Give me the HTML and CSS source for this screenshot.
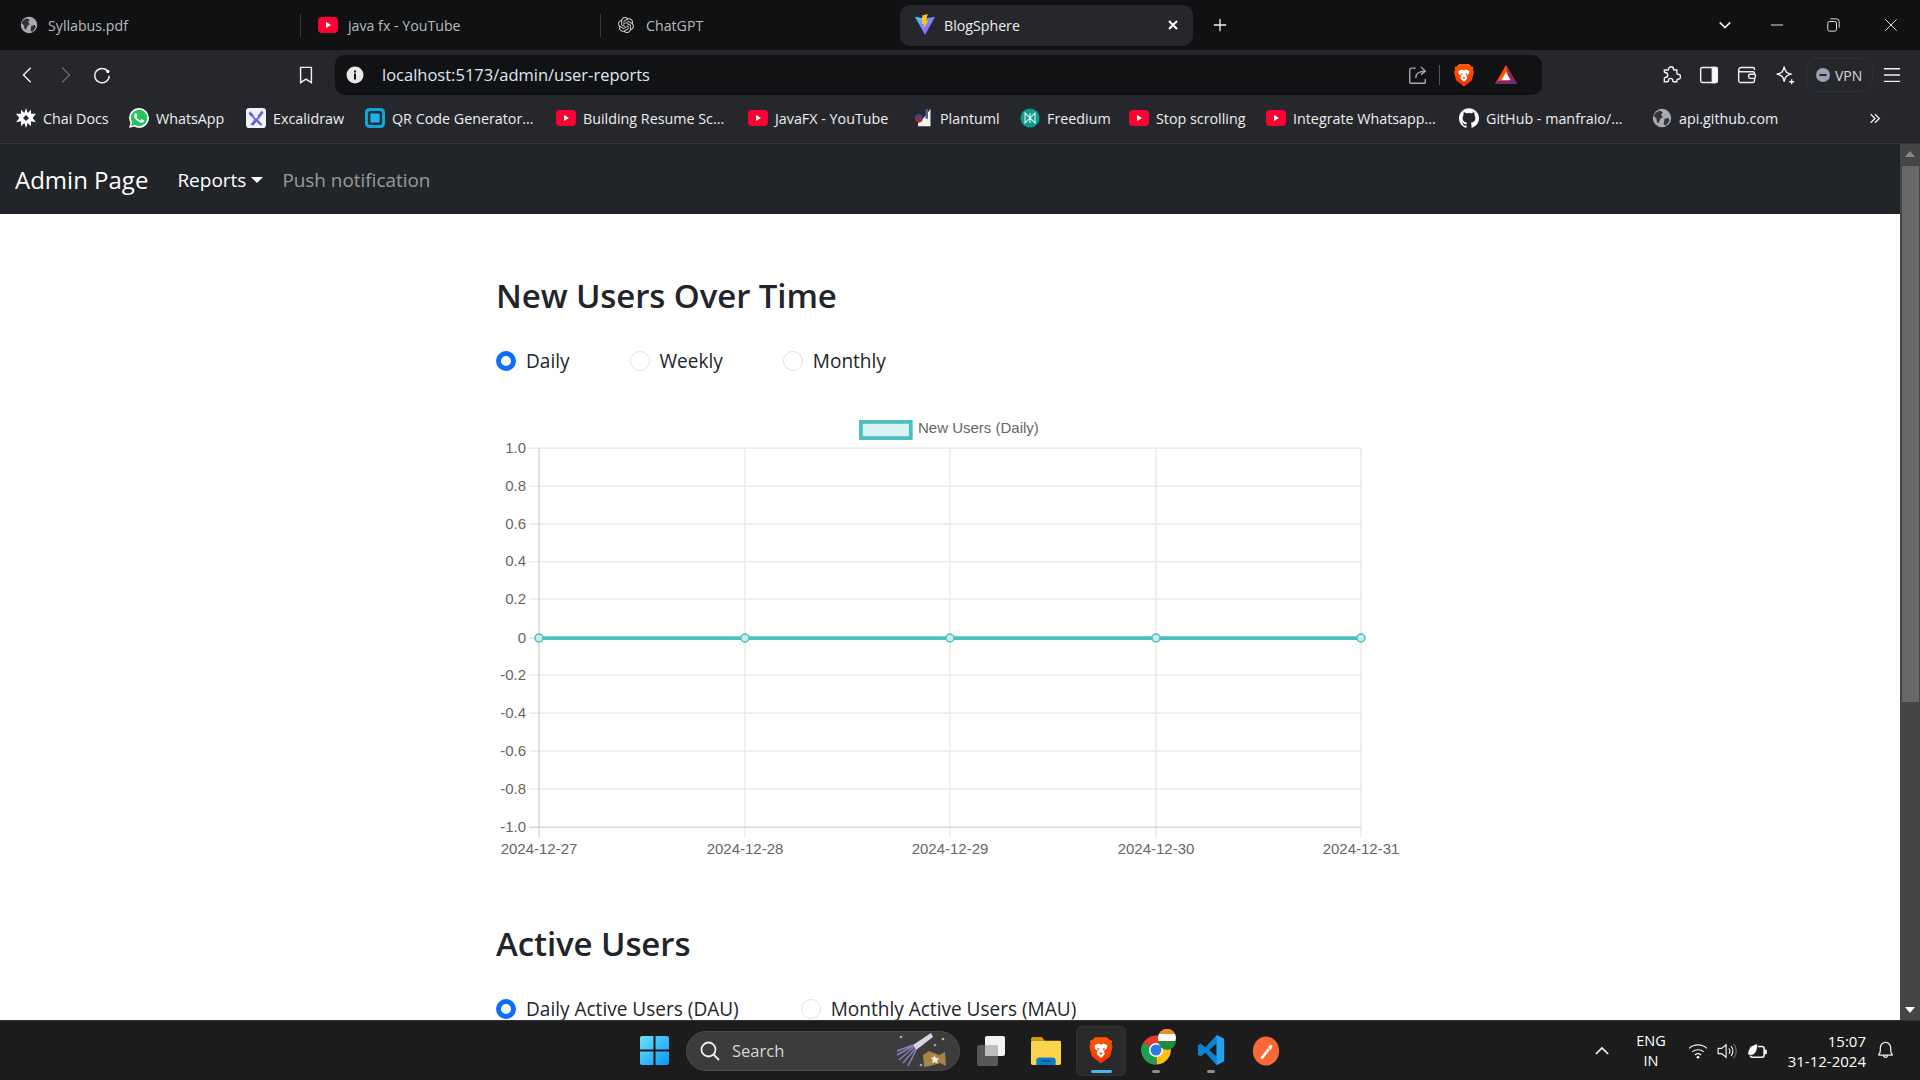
FILE: index.html
```html
<!DOCTYPE html>
<html lang="en">
<head>
<meta charset="utf-8">
<title>BlogSphere</title>
<link rel="stylesheet" href="styles.css">
</head>
<body>
<svg class="defs" aria-hidden="true">
  <defs>
    <linearGradient id="g-brave" x1="0" y1="0" x2="0" y2="1"><stop offset="0" stop-color="#ff5a00"/><stop offset="1" stop-color="#f52f10"/></linearGradient>
    <linearGradient id="g-win" x1="0" y1="0" x2="1" y2="1"><stop offset="0" stop-color="#6be3fb"/><stop offset="1" stop-color="#0a94fb"/></linearGradient>
    <linearGradient id="g-vite" x1="0" y1="0" x2="1" y2="1"><stop offset="0" stop-color="#41d1ff"/><stop offset="1" stop-color="#bd34fe"/></linearGradient>
    <symbol id="i-globe" viewBox="0 0 24 24"><circle cx="12" cy="12" r="11" fill="#a9abb0"/><path d="M4 6l5-3 4 2-2 3 2 3-3 2-2 5-2-1-1-5-3-2zM15 13l5-1 1 3-4 6-3-1z" fill="#33353a"/></symbol>
    <symbol id="i-yt" viewBox="0 0 20 16"><rect y="0" width="20" height="16" rx="4" fill="#ff0033"/><path d="M8 5l5 3-5 3z" fill="#fff"/></symbol>
    <symbol id="i-gpt" viewBox="0 0 24 24"><path fill="#c9cacc" d="M22.2819 9.8211a5.9847 5.9847 0 0 0-.5157-4.9108 6.0462 6.0462 0 0 0-6.5098-2.9A6.0651 6.0651 0 0 0 4.9807 4.1818a5.9847 5.9847 0 0 0-3.9977 2.9 6.0462 6.0462 0 0 0 .7427 7.0966 5.98 5.98 0 0 0 .511 4.9107 6.051 6.051 0 0 0 6.5146 2.9001A5.9847 5.9847 0 0 0 13.2599 24a6.0557 6.0557 0 0 0 5.7718-4.2058 5.9894 5.9894 0 0 0 3.9977-2.9001 6.0557 6.0557 0 0 0-.7475-7.0729zm-9.022 12.6081a4.4755 4.4755 0 0 1-2.8764-1.0408l.1419-.0804 4.7783-2.7582a.7948.7948 0 0 0 .3927-.6813v-6.7369l2.02 1.1686a.071.071 0 0 1 .038.052v5.5826a4.504 4.504 0 0 1-4.4945 4.4944zm-9.6607-4.1254a4.4708 4.4708 0 0 1-.5346-3.0137l.142.0852 4.783 2.7582a.7712.7712 0 0 0 .7806 0l5.8428-3.3685v2.3324a.0804.0804 0 0 1-.0332.0615L9.74 19.9502a4.4992 4.4992 0 0 1-6.1408-1.6464zM2.3408 7.8956a4.485 4.485 0 0 1 2.3655-1.9728V11.6a.7664.7664 0 0 0 .3879.6765l5.8144 3.3543-2.0201 1.1685a.0757.0757 0 0 1-.071 0l-4.8303-2.7865A4.504 4.504 0 0 1 2.3408 7.872zm16.5963 3.8558L13.1038 8.364 15.1192 7.2a.0757.0757 0 0 1 .071 0l4.8303 2.7913a4.4944 4.4944 0 0 1-.6765 8.1042v-5.6772a.79.79 0 0 0-.407-.667zm2.0107-3.0231l-.142-.0852-4.7735-2.7818a.7759.7759 0 0 0-.7854 0L9.409 9.2297V6.8974a.0662.0662 0 0 1 .0284-.0615l4.8303-2.7866a4.4992 4.4992 0 0 1 6.6802 4.66zM8.3065 12.863l-2.02-1.1638a.0804.0804 0 0 1-.038-.0567V6.0742a4.4992 4.4992 0 0 1 7.3757-3.4537l-.142.0805L8.704 5.459a.7948.7948 0 0 0-.3927.6813zm1.0976-2.3654l2.602-1.4998 2.6069 1.4998v2.9994l-2.5974 1.4997-2.6067-1.4997Z"/></symbol>
    <symbol id="i-vite" viewBox="0 0 24 24"><path d="M1 3l11 2 11-2-11 20z" fill="url(#g-vite)"/><path d="M15 0L9 1.500 8.500 11l2.500-.5-.5 5L16 7l-3 .5z" fill="#ffc517"/></symbol>
    <symbol id="i-brave" viewBox="0 0 24 24"><path d="M7 1h10l2.500 2.500 2 .5-.5 3 1 2-2.200 8.500L14 22l-2 1.500L10 22l-5.800-4.500L2 9l1-2-.5-3 2-.5z" fill="url(#g-brave)"/><path d="M6.500 8L10 6.500l2 1 2-1L17.500 8l-.8 3-2.200 1.500.7 3L13 18l-1 .8-1-.8-2.700-2.500.7-3L6.800 11z" fill="#fff"/><path d="M8.500 10l2.200 1-1 1.500zM15.500 10l-2.200 1 1 1.500zM10.500 15l1.500-1 1.500 1-1.500 1z" fill="#f4490a"/></symbol>
    <symbol id="i-bat" viewBox="0 0 24 22"><path d="M12 1L1 20h22z" fill="#ff5000"/><path d="M12 1l11 19H16z" fill="#9e1f63"/><path d="M1 20l3-3h16l3 3z" fill="#662d91"/><path d="M12 8l4.500 8h-9z" fill="#fff"/></symbol>
    <symbol id="i-chai" viewBox="0 0 24 24"><path d="M12 0l2 6 4-4 0 5 6 0-4 5 4 5-6-1 0 6-4-4-2 6-2-6-4 4 0-6-6 1 4-5-4-5 6 0 0-5 4 4z" fill="#fff"/><rect x="9.500" y="9.500" width="5" height="5" transform="rotate(45 12 12)" fill="#26272c"/></symbol>
    <symbol id="i-wa" viewBox="0 0 24 24"><circle cx="12" cy="12" r="11.500" fill="#27c45c"/><path fill="#fff" d="M17.472 14.382c-.297-.149-1.758-.867-2.03-.967-.273-.099-.471-.148-.67.15-.197.297-.767.966-.94 1.164-.173.199-.347.223-.644.075-.297-.15-1.255-.463-2.39-1.475-.883-.788-1.48-1.761-1.653-2.059-.173-.297-.018-.458.13-.606.134-.133.298-.347.446-.52.149-.174.198-.298.298-.497.099-.198.05-.371-.025-.52-.075-.149-.669-1.612-.916-2.207-.242-.579-.487-.5-.669-.51-.173-.008-.371-.01-.57-.01-.198 0-.52.074-.792.372-.272.297-1.04 1.016-1.04 2.479 0 1.462 1.065 2.875 1.213 3.074.149.198 2.096 3.2 5.077 4.487.709.306 1.262.489 1.694.625.712.227 1.36.195 1.871.118.571-.085 1.758-.719 2.006-1.413.248-.694.248-1.289.173-1.413-.074-.124-.272-.198-.57-.347m-5.421 7.403h-.004a9.87 9.87 0 01-5.031-1.378l-.361-.214-3.741.982.998-3.648-.235-.374a9.86 9.86 0 01-1.51-5.26c.001-5.45 4.436-9.884 9.888-9.884 2.64 0 5.122 1.03 6.988 2.898a9.825 9.825 0 012.893 6.994c-.003 5.45-4.437 9.884-9.885 9.884m8.413-18.297A11.815 11.815 0 0012.05 0C5.495 0 .16 5.335.157 11.892c0 2.096.547 4.142 1.588 5.945L.057 24l6.305-1.654a11.882 11.882 0 005.683 1.448h.005c6.554 0 11.89-5.335 11.893-11.893a11.821 11.821 0 00-3.48-8.413z"/></symbol>
    <symbol id="i-exc" viewBox="0 0 24 24"><rect width="24" height="24" rx="4" fill="#f2f1fb"/><path d="M5 4l15 16-3 1L3 7zM19 3l2 3-12 15-4-1z" fill="#6965db"/><path d="M9 10l3 3 3-3-1-1-2 1-2-1z" fill="#f2f1fb"/></symbol>
    <symbol id="i-qr" viewBox="0 0 24 24"><rect width="24" height="24" rx="5" fill="#12a5d8"/><rect x="3.500" y="3.500" width="17" height="17" rx="3" fill="#26313a"/><rect x="6.500" y="6.500" width="11" height="11" rx="1.500" fill="#1eb5ee"/></symbol>
    <symbol id="i-plant" viewBox="0 0 24 24"><path d="M16 8l5-7v21H6v-4l4-3z" fill="#f5f5f0"/><path d="M15 2l3-1v12h-3z" fill="#4d5f99"/><circle cx="7" cy="13" r="4.500" fill="#9a2a44"/><path d="M2 10l4-3 6 2-4 5z" fill="#3b4a78"/></symbol>
    <symbol id="i-free" viewBox="0 0 24 24"><circle cx="12" cy="12" r="11.500" fill="#0f9b91"/><path d="M6 6l6 6 6-6v12l-6-6-6 6zM12 6v12" fill="none" stroke="#d7f5f0" stroke-width="1.300"/></symbol>
    <symbol id="i-gh" viewBox="0 0 24 24"><path fill="#fff" d="M12 .297c-6.630 0-12 5.373-12 12 0 5.303 3.438 9.800 8.205 11.385.6.113.82-.258.82-.577 0-.285-.01-1.040-.015-2.040-3.338.724-4.042-1.610-4.042-1.610C4.422 18.070 3.633 17.700 3.633 17.700c-1.087-.744.084-.729.084-.729 1.205.084 1.838 1.236 1.838 1.236 1.070 1.835 2.809 1.305 3.495.998.108-.776.417-1.305.76-1.605-2.665-.3-5.466-1.332-5.466-5.930 0-1.310.465-2.380 1.235-3.220-.135-.303-.54-1.523.105-3.176 0 0 1.005-.322 3.300 1.230.96-.267 1.980-.399 3-.405 1.020.006 2.040.138 3 .405 2.280-1.552 3.285-1.230 3.285-1.230.645 1.653.24 2.873.12 3.176.765.84 1.230 1.910 1.230 3.220 0 4.610-2.805 5.625-5.475 5.920.42.36.81 1.096.81 2.220 0 1.606-.015 2.896-.015 3.286 0 .315.21.69.825.57C20.565 22.092 24 17.592 24 12.297c0-6.627-5.373-12-12-12"/></symbol>
  </defs>
</svg>

<header class="tabstrip">
  <div class="tab"><svg class="ic18"><use href="#i-globe"/></svg><span>Syllabus.pdf</span></div>
  <div class="tab sep"><svg class="ic-yt"><use href="#i-yt"/></svg><span>java fx - YouTube</span></div>
  <div class="tab sep"><svg class="ic16"><use href="#i-gpt"/></svg><span>ChatGPT</span></div>
  <div class="tab active"><svg class="ic22"><use href="#i-vite"/></svg><span class="tab-title">BlogSphere</span>
    <svg class="tab-x" viewBox="0 0 12 12"><path d="M2 2l8 8M10 2l-8 8"/></svg></div>
  <svg class="newtab" viewBox="0 0 16 16"><path d="M8 1v14M1 8h14"/></svg>
  <div class="winctl">
    <svg class="wc w-chev" viewBox="0 0 16 16"><path class="s2" d="M2 5l6 6 6-6"/></svg>
    <svg class="wc w-min" viewBox="0 0 16 16"><path d="M1 8h14"/></svg>
    <svg class="wc w-max" viewBox="0 0 16 16"><rect x="2" y="4" width="10" height="11" rx="2"/><path d="M5 1h7a3 3 0 0 1 3 3v7"/></svg>
    <svg class="wc" viewBox="0 0 16 16"><path d="M1.500 1.500l13 13M14.500 1.500l-13 13"/></svg>
  </div>
</header>

<nav class="toolbar">
  <svg class="tb" viewBox="0 0 20 20"><path d="M13 2L5 10l8 8"/></svg>
  <svg class="tb dim" viewBox="0 0 20 20"><path d="M7 2l8 8-8 8"/></svg>
  <svg class="tb" viewBox="0 0 20 20"><path d="M16.500 6a8 8 0 1 0 1.500 5"/><circle cx="16.500" cy="6" r="1.800" fill="#fff" stroke="none"/></svg>
  <svg class="tb bookmark" viewBox="0 0 20 20"><path d="M4 1.500h12v17l-6-4-6 4z"/></svg>
  <div class="omnibox">
    <svg class="info" viewBox="0 0 18 18"><circle cx="9" cy="9" r="8.500" fill="#e8e8ea"/><rect x="8" y="7.500" width="2" height="6" fill="#111214"/><rect x="8" y="4.500" width="2" height="2" fill="#111214"/></svg>
    <span class="url">localhost:5173/admin/user-reports</span>
    <svg class="tb small share" viewBox="0 0 22 22"><path d="M9 2.500H4a2 2 0 0 0-2 2V18a2 2 0 0 0 .5 2h17a2 2 0 0 0 .5-2v-3M9 14c0-5 3-8 11-8M15 1l5 5-5 4"/></svg>
    <span class="omni-sep"></span>
    <svg class="ic24 brave"><use href="#i-brave"/></svg>
    <svg class="ic-bat"><use href="#i-bat"/></svg>
  </div>
  <div class="tb-right">
    <svg class="tb" viewBox="0 0 24 24"><path d="M9 5a3 3 0 1 1 6 0c0 .8 0 1 1 1h3v4c0 1 .5 1 1.500 1a3 3 0 0 1 0 6c-1 0-1.500 0-1.500 1v2h-4c-1 0-1-.5-1-1.500a2.500 2.500 0 0 0-5 0c0 1 0 1.500-1 1.500H4v-4c0-1 .5-1 1-1a3 3 0 0 0 0-6c-.5 0-1 0-1-1V6h4c1 0 1-.2 1-1z"/></svg>
    <svg class="tb" viewBox="0 0 24 24"><rect x="2" y="3" width="20" height="18" rx="2"/><path d="M16 3h4a2 2 0 0 1 2 2v14a2 2 0 0 1-2 2h-4z" fill="#fff"/></svg>
    <svg class="tb" viewBox="0 0 24 24"><path d="M21 6V5a2 2 0 0 0-2-2H5a3 3 0 0 0-3 3v13a2 2 0 0 0 2 2h15a2 2 0 0 0 2-2v-3M2 6a2 2 0 0 0 2 2h15a2 2 0 0 1 2 2v2"/><rect x="14" y="11" width="8" height="5" rx="1.500"/></svg>
    <svg class="tb" viewBox="0 0 24 24"><path d="M11 2c1 6 3 8 9 9-6 1-8 3-9 9-1-6-3-8-9-9 6-1 8-3 9-9z"/><path class="s2" d="M20 17v6M17 20h6"/></svg>
    <div class="vpn"><svg class="vpn-dot" viewBox="0 0 14 14"><circle cx="7" cy="7" r="7" fill="#9c9fb0"/><rect x="3.500" y="6" width="7" height="2" fill="#26272c"/></svg><span>VPN</span></div>
    <svg class="tb menu" viewBox="0 0 20 20"><path d="M1 3h18M1 10h18M1 17h18"/></svg>
  </div>
</nav>

<div class="bookmarks">
  <a class="bm"><svg class="ic20"><use href="#i-chai"/></svg><span>Chai Docs</span></a>
  <a class="bm"><svg class="ic20"><use href="#i-wa"/></svg><span>WhatsApp</span></a>
  <a class="bm"><svg class="ic20"><use href="#i-exc"/></svg><span>Excalidraw</span></a>
  <a class="bm"><svg class="ic20"><use href="#i-qr"/></svg><span>QR Code Generator...</span></a>
  <a class="bm"><svg class="ic-yt"><use href="#i-yt"/></svg><span>Building Resume Sc...</span></a>
  <a class="bm"><svg class="ic-yt"><use href="#i-yt"/></svg><span>JavaFX - YouTube</span></a>
  <a class="bm"><svg class="ic20"><use href="#i-plant"/></svg><span>Plantuml</span></a>
  <a class="bm"><svg class="ic20"><use href="#i-free"/></svg><span>Freedium</span></a>
  <a class="bm"><svg class="ic-yt"><use href="#i-yt"/></svg><span>Stop scrolling</span></a>
  <a class="bm"><svg class="ic-yt"><use href="#i-yt"/></svg><span>Integrate Whatsapp...</span></a>
  <a class="bm"><svg class="ic20"><use href="#i-gh"/></svg><span>GitHub - manfraio/...</span></a>
  <a class="bm"><svg class="ic20"><use href="#i-globe"/></svg><span>api.github.com</span></a>
  <svg class="more" viewBox="0 0 14 12"><path d="M2 1l5 5-5 5M7 1l5 5-5 5"/></svg>
</div>

<div class="viewport">
  <div class="page">
    <div class="navbar">
      <a class="brand">Admin Page</a>
      <a class="nav-link on">Reports<i class="caret"></i></a>
      <a class="nav-link push">Push notification</a>
    </div>
    <main class="content">
      <h3 class="title">New Users Over Time</h3>
      <div class="radios">
        <label class="radio"><i class="dot checked"></i>Daily</label>
        <label class="radio"><i class="dot"></i>Weekly</label>
        <label class="radio"><i class="dot"></i>Monthly</label>
      </div>
      <svg class="chart" viewBox="0 0 910 460" width="910" height="460">
        <rect class="legend-box" x="364.900" y="6.900" width="49.900" height="16.200"/>
        <text class="lbl" x="422" y="18">New Users (Daily)</text>
        <g class="grid">
          <path d="M33 33H865M33 71H865M33 109H865M33 146.500H865M33 184H865M33 223H865M33 260H865M33 298H865M33 336H865M33 374H865"/>
          <path d="M249 33V422M454 33V422M660 33V422M865 33V422"/>
        </g>
        <path class="axis" d="M33 412H865M43 33V422"/>
        <g class="lbl ylab">
          <text x="30" y="38">1.0</text><text x="30" y="76">0.8</text><text x="30" y="114">0.6</text><text x="30" y="151">0.4</text><text x="30" y="189">0.2</text><text x="30" y="228">0</text><text x="30" y="265">-0.2</text><text x="30" y="303">-0.4</text><text x="30" y="341">-0.6</text><text x="30" y="379">-0.8</text><text x="30" y="417">-1.0</text>
        </g>
        <g class="lbl xlab">
          <text x="43" y="439">2024-12-27</text><text x="249" y="439">2024-12-28</text><text x="454" y="439">2024-12-29</text><text x="660" y="439">2024-12-30</text><text x="865" y="439">2024-12-31</text>
        </g>
        <path class="series" d="M43 223H865"/>
        <g class="pt"><circle cx="43" cy="223" r="4"/><circle cx="249" cy="223" r="4"/><circle cx="454" cy="223" r="4"/><circle cx="660" cy="223" r="4"/><circle cx="865" cy="223" r="4"/></g>
      </svg>
      <h3 class="title second">Active Users</h3>
      <div class="radios wide">
        <label class="radio"><i class="dot checked"></i>Daily Active Users (DAU)</label>
        <label class="radio"><i class="dot"></i>Monthly Active Users (MAU)</label>
      </div>
    </main>
  </div>
  <div class="scrollbar">
    <i class="arrow up"></i>
    <div class="thumb"></div>
    <i class="arrow down"></i>
  </div>
</div>

<footer class="taskbar">
  <svg class="tk win" viewBox="0 0 28 28"><path d="M0 2a2 2 0 0 1 2-2h11v13H0zM15 0h11a2 2 0 0 1 2 2v11H15zM0 15h13v13H2a2 2 0 0 1-2-2zM15 15h13v11a2 2 0 0 1-2 2H15z" fill="url(#g-win)"/></svg>
  <div class="search">
    <svg class="s-ic" viewBox="0 0 20 20"><circle cx="8.500" cy="8.500" r="7"/><path d="M13.500 13.500L19 19"/></svg>
    <span>Search</span>
    <svg class="candy" viewBox="0 0 56 40"><path d="M36 2L18 14l3 5L38 6z" fill="#d9d4e4"/><path d="M18 14L2 20M18 15L2 24M19 16L4 29M20 18L8 32M21 19L13 35" stroke="#8a80b8" stroke-width="1.500" fill="none"/><path d="M28 24l6-4 10 4 6-3 1 14-6-3-10 3-6 1z" fill="#a98545"/><path d="M39 24l2 3 3 0-2 3 1 3-3-2-3 1 1-3-2-2 3-1z" fill="#f2ead5"/><circle cx="6" cy="6" r="1.300" fill="#c9b36a"/><circle cx="48" cy="8" r="1.300" fill="#c9b36a"/><circle cx="26" cy="34" r="1.300" fill="#a79bd0"/><circle cx="40" cy="14" r="1.300" fill="#a79bd0"/></svg>
  </div>
  <svg class="tk tv" viewBox="0 0 28 30"><rect x="0" y="9" width="21" height="21" rx="2" fill="#585858"/><rect x="8" y="0" width="20" height="20" rx="2" fill="#f2f2f2"/><rect x="8" y="9" width="13" height="11" fill="#bdbdbd"/></svg>
  <svg class="tk ex" viewBox="0 0 28 30" preserveAspectRatio="none"><path d="M0 2a2 2 0 0 1 2-2h8l3 4H0z" fill="#d59a10"/><rect y="4" width="28" height="26" rx="1.500" fill="#fcd34d"/><path d="M5 30v-5a3 3 0 0 1 3-3h12a3 3 0 0 1 3 3v5z" fill="#0b7cc9"/><rect x="10" y="25" width="8" height="1.500" fill="#0a4e86"/></svg>
  <div class="tk-brave"><svg class="tk-b"><use href="#i-brave"/></svg><i class="run on"></i></div>
  <div class="tk-app chrome">
    <svg class="tk-c" viewBox="0 0 36 36"><circle cx="15" cy="21" r="14.500" fill="#e33b2e"/><path d="M15 21L28 14a14.500 14.500 0 0 1-12 21.500z" fill="#fbc116"/><path d="M15 21L15.500 35.500A14.500 14.500 0 0 1 2 14z" fill="#1f9e4c"/><circle cx="15" cy="21" r="7" fill="#fff"/><circle cx="15" cy="21" r="5.500" fill="#2a7ae4"/><circle cx="26" cy="9" r="9" fill="#fff"/><path d="M26 0a9 9 0 0 1 8 5H18a9 9 0 0 1 8-5z" fill="#ef8b2c"/><path d="M17 12h18a9 9 0 0 1-18 0z" fill="#1f8a3d"/></svg>
    <i class="run"></i>
  </div>
  <div class="tk-app vs">
    <svg class="tk-v" viewBox="0 0 28 32"><path d="M20 0l8 4v24l-8 4-12-13-5 4-3-2v-10l3-2 5 4zM20 9l-8 7 8 7z" fill="#0f7fd0"/><path d="M20 0l8 4v24l-8 4z" fill="#26a1ef"/></svg>
    <i class="run"></i>
  </div>
  <svg class="tk pm" viewBox="0 0 28 32"><ellipse cx="14" cy="16" rx="14" ry="15.500" fill="#f76935"/><path d="M8 23l8-10 2 2-8 10zM16 12l3-3 2 2-2 4z" fill="#fff"/></svg>
  <div class="tray">
    <svg class="tr chev" viewBox="0 0 16 10"><path d="M1 9l7-7 7 7"/></svg>
    <div class="lang"><span>ENG</span><span>IN</span></div>
    <svg class="tr wifi" viewBox="0 0 22 18"><path d="M1 6a15 15 0 0 1 20 0M4.500 10a10 10 0 0 1 13 0M7.500 13.500a5.500 5.500 0 0 1 7 0"/><circle cx="11" cy="16" r="1.500" fill="#fff" stroke="none"/></svg>
    <svg class="tr vol" viewBox="0 0 22 18"><path d="M1 6h4l5-4v14l-5-4H1zM13 6a4 4 0 0 1 0 6M15.500 3.500a8 8 0 0 1 0 11"/><path class="faint" d="M18 1a11 11 0 0 1 0 16"/></svg>
    <svg class="tr bat" viewBox="0 0 22 18"><rect x="3.500" y="4" width="15.500" height="12" rx="2.500" stroke-width="1.800"/><rect x="19.500" y="7.500" width="2.500" height="5" fill="#fff" stroke="none"/><path d="M0.500 13C0.500 6 5 2.500 11.500 0.500c.5 8-2 13-8 13.500z" fill="#fff" stroke="#1c1c1c" stroke-width="1"/></svg>
    <div class="clock"><span>15:07</span><span>31-12-2024</span></div>
    <svg class="tr bell" viewBox="0 0 18 20"><path d="M2 14c1-1 1.500-2 1.500-4V7a5.500 5.500 0 0 1 11 0v3c0 2 .5 3 1.500 4 .5.500 0 1-.5 1H2.500c-.5 0-1-.5-.5-1zM7 15c0 3 4 3 4 0"/></svg>
  </div>
</footer>
</body>
</html>
```
FILE: styles.css
```css
* { box-sizing: border-box; }
html, body { margin: 0; height: 100%; }
body {
  width: 1920px; height: 1080px; overflow: hidden;
  display: flex; flex-direction: column;
  font-family: "Open Sans", "Noto Sans", sans-serif;
  background: #fff;
}
.defs { position: absolute; width: 0; height: 0; }
svg { display: block; flex: none; }
.ic16 { width: 16px; height: 16px; }
.ic18 { width: 18px; height: 18px; }
.ic20 { width: 20px; height: 20px; }
.ic22 { width: 22px; height: 22px; }
.ic24 { width: 24px; height: 24px; }
.ic-yt { width: 20px; height: 16px; }
.ic-bat { width: 24px; height: 22px; }

/* tab strip */
.tabstrip {
  height: 50px; background: #101113; color: #b9babd;
  display: grid; grid-template-columns: 300px 300px 300px 293px 54px 1fr;
  align-items: center; font-size: 14.200px;
}
.tab { display: flex; align-items: center; height: 41px; padding-left: 20px; gap: 10px; position: relative; }
.tab.sep { padding-left: 18px; }
.tab.sep:nth-child(3) { gap: 12px; }
.tab.sep::before { content: ""; position: absolute; left: 0; top: 9px; height: 23px; width: 1px; background: #3a3b3f; }
.tab.active { background: #26272c; border-radius: 10px; color: #eee; padding-left: 14px; gap: 8px; }
.tab-title { flex: 1; }
.tab-x { width: 12px; height: 12px; margin-right: 14px; fill: none; stroke: #fff; stroke-width: 2; }
.newtab { width: 14px; height: 14px; margin-left: 20px; fill: none; stroke: #eee; stroke-width: 1.500; }
.winctl { display: flex; justify-content: flex-end; align-items: center; padding-right: 22px; }
.wc { width: 14px; height: 14px; fill: none; stroke: #e8e8e8; stroke-width: 1.100; }
.wc .s2 { stroke-width: 2; }
.w-chev { margin-right: 38px; }
.w-min { margin-right: 42px; }
.w-max { margin-right: 44px; }

/* toolbar */
.toolbar { height: 45px; background: #26272c; display: flex; align-items: flex-end; padding-left: 19px; }
.tb { width: 18px; height: 18px; fill: none; stroke: #f0f0f2; stroke-width: 1.600; margin-bottom: 11px; margin-right: 19px; }
.tb.dim { stroke: #66676b; }
.tb.bookmark { margin-left: 167px; margin-right: 20px; }
.omnibox {
  width: 1207px; height: 40px; background: #111214; border-radius: 10px;
  display: flex; align-items: center; padding-left: 11px; color: #e6e6e8;
}
.info { width: 18px; height: 18px; }
.url { font-size: 16.500px; margin-left: 18px; flex: 1; color: #dfe6f3; padding-bottom: 2px; }
.tb.small { margin: 0; width: 19px; height: 19px; stroke: #a8a9ad; }
.omni-sep { width: 1px; height: 20px; background: #55565a; margin-left: 12px; }
.brave { margin-left: 12px; }
.ic-bat { margin-left: 18px; margin-right: 24px; }
.tb-right { display: flex; align-items: center; padding-left: 119px; height: 40px; }
.tb-right .tb { margin: 0 18px 0 0; width: 20px; height: 20px; stroke-width: 1.700; }
.vpn {
  width: 67px; height: 34px; border: 1px solid #303137; border-radius: 12px;
  display: flex; align-items: center; gap: 5px; padding-left: 9px;
  color: #d8d9dd; font-size: 14px; margin-left: -7px;
}
.vpn-dot { width: 14px; height: 14px; }
.tb-right .menu { margin: 0 0 0 9px; width: 20px; height: 18px; stroke-width: 1.500; }

/* bookmarks */
.bookmarks {
  height: 49px; background: #26272c; border-bottom: 1px solid #36373b;
  display: grid; grid-template-columns: 113px 117px 119px 191px 192px 165px 107px 109px 137px 193px 193px 217px 30px;
  align-items: center; padding: 0 0 2px 16px; color: #eeeef0; font-size: 14.300px;
}
.bm { display: flex; align-items: center; gap: 7px; white-space: nowrap; }
.more { width: 12px; height: 11px; fill: none; stroke: #eee; stroke-width: 1.500; }

/* page */
.viewport { flex: 1; display: flex; min-height: 0; }
.page { flex: 1; min-width: 0; overflow: hidden; }
.navbar { height: 70px; background: #212529; display: flex; align-items: center; padding-left: 15px; padding-top: 1px; }
.brand { font-size: 24px; color: #fff; margin-right: 29px; }
.nav-link { font-size: 19px; color: rgba(255,255,255,.55); margin-right: 19px; display: flex; align-items: center; }
.nav-link.on { color: #fff; }
.nav-link.push { font-size: 18.900px; }
.caret { width: 0; height: 0; border: 6px solid transparent; border-top-color: #fff; border-bottom: 0; margin-left: 5px; }
.content { padding: 61px 0 0 496px; color: #212529; }
.title { margin: 0; font-size: 33px; font-weight: 600; letter-spacing: -0.1px; line-height: 42px; height: 42px; }
.title.second { margin-top: 48px; }
.radios { display: flex; gap: 60px; margin-top: 29px; height: 30px; }
.radios.wide { gap: 62px; }
.radio { display: flex; align-items: center; font-size: 19.050px; line-height: 31px; }
.dot { width: 20px; height: 20px; border-radius: 50%; border: 1px solid #dee2e6; background: #fff; margin-right: 10px; }
.dot.checked { border: 5px solid #0d6efd; }

/* chart */
.chart { margin-top: 39px; }
.legend-box { fill: rgba(75,192,192,.2); stroke: #4bc0c0; stroke-width: 3.750; }
.lbl { font: 15px "Liberation Sans", Arial, sans-serif; fill: #666; }
.ylab { text-anchor: end; }
.xlab { text-anchor: middle; }
.grid path { fill: none; stroke: #e6e6e6; stroke-width: 1.250; }
.axis { fill: none; stroke: #d0d0d0; stroke-width: 1.250; }
.series { fill: none; stroke: #4bc0c0; stroke-width: 3.750; }
.pt circle { fill: #c6ecec; stroke: #4bc0c0; stroke-width: 1.500; }

/* scrollbar */
.scrollbar { width: 20px; background: #454545; display: flex; flex-direction: column; align-items: center; }
.arrow { width: 0; height: 0; border: 5px solid transparent; flex: none; }
.arrow.up { border-bottom: 6px solid #8a8a8a; border-top: 0; margin-top: 7px; }
.thumb { width: 17px; height: 536px; margin-top: 9px; background: #686868; }
.arrow.down { border-top: 6px solid #fff; border-bottom: 0; margin-top: auto; margin-bottom: 7px; }

/* taskbar */
.taskbar {
  height: 60px; background: #1c1c1c; border-top: 1px solid #353535;
  display: flex; align-items: center; padding-left: 640px; flex: none;
  color: #fff;
}
.tk { flex: none; }
.win { width: 29px; height: 29px; }
.search {
  width: 274px; height: 40px; border-radius: 20px; background: #3c3c3c; border: 1px solid #4a4a4a;
  margin-left: 17px; display: flex; align-items: center; padding-left: 13px; color: #d8d8d8; font-size: 16.500px;
}
.s-ic { width: 20px; height: 20px; fill: none; stroke: #eee; stroke-width: 1.800; margin-right: 12px; }
.candy { width: 60px; height: 40px; margin-left: auto; margin-right: 6px; }
.tv { width: 30px; height: 30px; margin-left: 16px; }
.ex { width: 30px; height: 28px; margin-left: 25px; }
.tk-brave {
  width: 50px; height: 50px; margin-left: 15px; background: #2a2a2a; border-radius: 5px; border: 1px solid #323232;
  display: flex; flex-direction: column; align-items: center; padding-top: 8px;
}
.tk-b { width: 28px; height: 30px; }
.run { display: block; width: 8px; height: 3px; border-radius: 2px; background: #8e8e8e; margin-top: 5px; }
.run.on { width: 21px; background: #4fb4f0; }
.tk-app { display: flex; flex-direction: column; align-items: center; }
.chrome { width: 37px; margin-left: 14px; padding-right: 5px; }
.tk-c { width: 36px; height: 36px; margin-right: -5px; }
.vs { width: 30px; margin-left: 19px; padding-top: 6px; }
.tk-v { width: 30px; height: 30px; }
.pm { width: 30px; height: 30px; margin-left: 25px; }
.tray { margin-left: auto; display: flex; align-items: center; font-size: 14.500px; }
.tr { fill: none; stroke: #f2f2f2; stroke-width: 1.300; }
.chev { width: 14px; height: 9px; stroke-width: 2; }
.lang { width: 46px; display: flex; flex-direction: column; align-items: center; line-height: 20px; margin-left: 19px; margin-right: 2px; }
.wifi { width: 20px; height: 16px; margin-left: 12px; }
.vol { width: 20px; height: 16px; margin-left: 9px; }
.faint { stroke: #666; }
.bat { width: 20px; height: 16px; margin-left: 10px; }
.clock { display: flex; flex-direction: column; align-items: flex-end; line-height: 20px; margin-left: 9px; width: 90px; font-size: 15px; }
.bell { width: 17px; height: 19px; margin-left: 11px; margin-right: 26px; }
```
